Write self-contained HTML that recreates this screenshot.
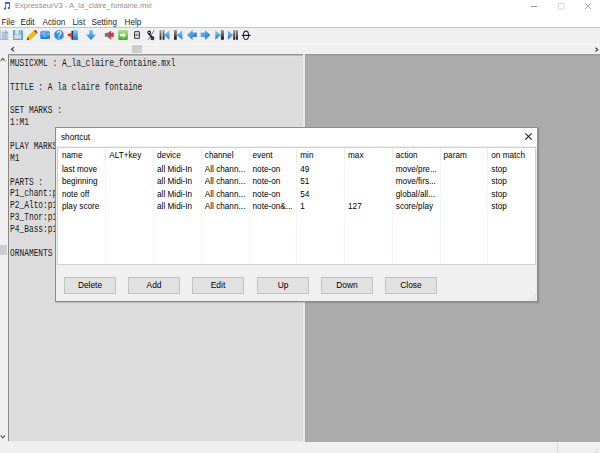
<!DOCTYPE html>
<html><head><meta charset="utf-8">
<style>
*{margin:0;padding:0;box-sizing:border-box}
html,body{width:600px;height:453px;overflow:hidden;background:#f0f0f0;font-family:"Liberation Sans",sans-serif;position:relative}
.a{position:absolute}
#title{left:0;top:0;width:600px;height:14px;background:#fff}
#menu{left:0;top:14px;width:600px;height:13px;background:#fff}
#sep{left:0;top:27px;width:600px;height:1px;background:#c6c6c6}
#tb{left:0;top:28px;width:600px;height:16px;background:#f0f0f0}
#hs{left:8px;top:44px;width:592px;height:10px;background:#f0f0f0;border-top:1px solid #fafafa}
#thumb{left:132px;top:45px;width:10px;height:8px;background:#cdcdcd}
#vs{left:0;top:54px;width:8px;height:387px;background:#f0f0f0}
#vthumb{left:0;top:245px;width:7px;height:10px;background:#cdcdcd}
#txt{left:8px;top:54px;width:295px;height:387px;background:#dcdcdc;border-left:1px solid #838383;border-top:1px solid #969696}
#txtt2{left:9px;top:55px;width:294px;height:1px;background:#b8b8b8}
#txtt3{left:9px;top:56px;width:294px;height:1px;background:#e2e2e2}
#txtl2{left:9px;top:55px;width:1px;height:386px;background:#e2e2e2}
#txtr{left:303px;top:54px;width:2px;height:388px;background:#e9e9e9}
#txtb{left:8px;top:441px;width:297px;height:1px;background:#ebebeb}
#gray{left:305px;top:54px;width:295px;height:388px;background:#ababab;border-top:1px solid #999;border-left:1px solid #a5a5a5}
#gray2{left:306px;top:55px;width:294px;height:1px;background:#a3a3a3}
#status{left:0;top:442px;width:600px;height:11px;background:#f0f0f0}
#ssep{left:557px;top:443px;width:1px;height:10px;background:#d8d8d8}
pre{font-family:"Liberation Mono",monospace;font-size:10.5px;line-height:11.86px;color:#1a1a1a;transform:scaleX(0.75);transform-origin:0 0;white-space:pre}
.tt{font-size:7.6px;color:#929292;white-space:nowrap}
.mn{font-size:8.2px;color:#262626;white-space:nowrap}
#dlg{left:55px;top:127px;width:483px;height:175px;background:#f0f0f0;border:1px solid #8c8c8c;box-shadow:1px 1px 1px rgba(0,0,0,0.15)}
#dtitle{left:0;top:0;width:481px;height:18px;background:#fff}
#list{left:1px;top:19px;width:479px;height:118px;background:#fff;border:1px solid #d0d0d0}
.dt{font-size:8.2px;color:#000;white-space:nowrap}
.btn{height:17px;width:52px;background:#e1e1e1;border:1px solid #c2c2c2;font-size:8.4px;text-align:center;line-height:15.5px;color:#000}
.cs{width:1px;background:#e8e8e8}
</style></head><body>
<div class="a" id="title"></div>
<div class="a" id="menu"></div>
<div class="a" id="sep"></div>
<div class="a" id="tb"></div>
<div class="a" id="hs"></div>
<div class="a" id="thumb"></div>
<div class="a" id="vs"></div>
<div class="a" id="vthumb"></div>
<div class="a" id="txt"></div>
<div class="a" id="txtt2"></div>
<div class="a" id="txtt3"></div>
<div class="a" id="txtl2"></div>
<div class="a" id="txtr"></div>
<div class="a" id="txtb"></div>
<div class="a" id="gray"></div>
<div class="a" id="gray2"></div>
<div class="a" id="status"></div>
<div class="a" id="ssep"></div>

<svg class="a" style="left:0;top:0" width="260" height="44" viewBox="0 0 260 44">
<defs>
<linearGradient id="gb" x1="0" y1="0" x2="0" y2="1"><stop offset="0" stop-color="#8fd4fb"/><stop offset="1" stop-color="#1574dc"/></linearGradient>
<linearGradient id="gbh" x1="0" y1="0" x2="1" y2="1"><stop offset="0" stop-color="#7cc8f8"/><stop offset="1" stop-color="#1668d8"/></linearGradient>
<linearGradient id="gk" x1="0" y1="0" x2="0" y2="1"><stop offset="0" stop-color="#9a9a9a"/><stop offset="1" stop-color="#111"/></linearGradient>
<linearGradient id="gg" x1="0" y1="0" x2="0" y2="1"><stop offset="0" stop-color="#b0e680"/><stop offset="1" stop-color="#38b02c"/></linearGradient>
<linearGradient id="gbox" x1="0" y1="0" x2="0" y2="1"><stop offset="0" stop-color="#5fb2f0"/><stop offset="1" stop-color="#1f7ad8"/></linearGradient>
</defs>
<!-- music note -->
<g fill="#1f6ee0">
<rect x="5.2" y="2" width="4.8" height="1.9"/>
<rect x="5.2" y="2" width="0.9" height="7"/>
<rect x="9.1" y="2" width="0.9" height="6.3"/>
<ellipse cx="5" cy="8.6" rx="1.2" ry="1.1"/>
<ellipse cx="8.9" cy="8" rx="1.2" ry="1.1"/>
</g>
<!-- 1 new doc -->
<path d="M0 30 H5.8 L8.7 32.9 V39.8 H0 Z" fill="#dce6ee"/>
<rect x="0" y="30" width="1" height="9.8" fill="#bcd0dc"/>
<rect x="2" y="32" width="5.6" height="7" fill="#b2bee6"/>
<path d="M5.4 30 V33.3 H8.7 Z" fill="#84aec4"/>
<rect x="0.5" y="39" width="8" height="0.8" fill="#8fb0c4"/>
<!-- 2 floppy -->
<path d="M13 30 H22 L23 31 V39.9 H13 Z" fill="#55aceb"/>
<rect x="15" y="30.2" width="5.6" height="4.3" fill="#e4e4e4"/>
<rect x="18.9" y="30.8" width="1.1" height="3" fill="#4a9ee0"/>
<rect x="14" y="35" width="7" height="3.8" fill="#dcd8d8"/>
<!-- 3 pencil -->
<path d="M27 40 L28 36.5 L34.5 30.5 L37 33 L30.5 39 Z" fill="#f2c200" stroke="#d88a00" stroke-width="0.6"/>
<path d="M34 31 L35.3 29.8 L37.6 32.1 L36.4 33.4 Z" fill="#e02020"/>
<path d="M26.8 40.2 L27.7 37.6 L29.3 39.2 Z" fill="#603010"/>
<!-- 4 blue box -->
<rect x="40.2" y="30.8" width="9.8" height="8.2" rx="1.5" fill="url(#gbox)"/>
<g fill="#b8dcf8"><rect x="42" y="33" width="1.2" height="1.2"/><rect x="43.8" y="32" width="0.7" height="5"/><rect x="44.5" y="35.5" width="1.2" height="1.2"/><rect x="46.8" y="34" width="2.4" height="0.9"/></g>
<!-- 5 help -->
<circle cx="59" cy="35" r="4.9" fill="#2f8ee2" stroke="#9fcff4" stroke-width="0.5"/>
<path d="M57.2 33.5 Q57.2 31.6 59 31.6 Q60.9 31.6 60.9 33.3 Q60.9 34.4 59.6 35 Q59 35.3 59 36.3" fill="none" stroke="#fff" stroke-width="1.2"/>
<rect x="58.4" y="37.2" width="1.2" height="1.2" fill="#fff"/>
<!-- 6 exit -->
<rect x="71.5" y="30" width="6.4" height="9.9" fill="url(#gb)"/>
<rect x="71.6" y="31" width="1.5" height="8.4" fill="#143a68"/>
<path d="M67.7 33.8 H70.3 V32.3 L72.9 35 L70.3 37.7 V36.2 H67.7 Z" fill="#f22a18"/>
<!-- 7 down arrow -->
<path d="M89 30 H93 V34.5 H96 L91 40 L86 34.5 H89 Z" fill="url(#gb)"/>
<!-- 8 mute -->
<rect x="104.9" y="33.1" width="2.2" height="3.6" fill="#6a6a6a"/>
<path d="M107 33.1 L111.3 30.4 V40 L107 36.7 Z" fill="#7a7a7a"/>
<path d="M109.6 32.9 L113.6 36.6 M113.6 32.9 L109.6 36.6" stroke="#ff1c1c" stroke-width="2"/>
<!-- 9 green -->
<rect x="118.2" y="30" width="9.7" height="9.9" rx="0.8" fill="url(#gg)"/>
<path d="M120 33.9 H123 V32.3 L126 35.1 L123 37.9 V36.3 H120 Z" fill="#fff"/>
<!-- 10 symbol -->
<rect x="134.6" y="31.5" width="4.8" height="7" rx="1" fill="none" stroke="#3a3a3a" stroke-width="1.1"/>
<path d="M137 30.6 V39.1" stroke="#999" stroke-width="0.7"/>
<path d="M134.3 35 H139.7" stroke="#555" stroke-width="0.9"/>
<!-- 11 percent-ish -->
<path d="M148.2 39.8 L154.2 30.5" stroke="#4a6ab0" stroke-width="0.9"/>
<ellipse cx="149.2" cy="32.6" rx="1.3" ry="1.5" fill="none" stroke="#1a1a2a" stroke-width="1.1"/>
<path d="M148.6 33.6 L153 38.4" stroke="#111" stroke-width="1.5"/>
<ellipse cx="152.4" cy="38.2" rx="1.4" ry="1.5" fill="none" stroke="#1a1a3a" stroke-width="1.1"/>
<!-- 12 |< with two bars -->
<rect x="159.6" y="30.1" width="1.8" height="9.6" fill="url(#gk)"/>
<rect x="162.6" y="30.1" width="1.9" height="9.6" fill="url(#gk)"/>
<path d="M164 35 L169.4 30.3 V39.8 Z" fill="url(#gb)"/>
<!-- 13 |< -->
<rect x="174" y="30.1" width="2.8" height="9.6" fill="url(#gk)"/>
<path d="M176.5 35 L182.4 30.3 V39.8 Z" fill="url(#gb)"/>
<!-- 14 left arrow -->
<path d="M186.8 35 L192.6 29.9 V32.4 H196.8 V36.9 H192.6 V39.9 Z" fill="url(#gbh)"/>
<!-- 15 right arrow -->
<path d="M210.4 35 L205 29.9 V32.4 H200.6 V36.9 H205 V39.9 Z" fill="url(#gbh)"/>
<!-- 16 >| -->
<path d="M215.3 30.2 L220.9 35 L215.3 39.8 Z" fill="url(#gb)"/>
<rect x="220.9" y="30.1" width="3" height="9.6" fill="url(#gk)"/>
<!-- 17 >|| -->
<path d="M227.9 30.2 L233.2 35 L227.9 39.8 Z" fill="url(#gb)"/>
<rect x="233.2" y="30.1" width="2.1" height="9.6" fill="url(#gk)"/>
<rect x="236" y="30.1" width="1.9" height="9.6" fill="url(#gk)"/>
<!-- 18 theta -->
<ellipse cx="246" cy="35.3" rx="2.6" ry="4.2" fill="none" stroke="#2a2a40" stroke-width="1.1"/>
<path d="M241.8 35.4 H250.7" stroke="#111" stroke-width="1.1"/>
</svg>

<!-- title -->
<div class="a tt" style="left:15px;top:1px">ExpresseurV3 - A_la_claire_fontaine.mxl</div>
<div class="a mn" style="left:1.5px;top:17.6px">File</div>
<div class="a mn" style="left:20.5px;top:17.6px">Edit</div>
<div class="a mn" style="left:42.5px;top:17.6px">Action</div>
<div class="a mn" style="left:72.5px;top:17.6px">List</div>
<div class="a mn" style="left:91.5px;top:17.6px">Setting</div>
<div class="a mn" style="left:124.5px;top:17.6px">Help</div>

<!-- text area -->
<pre class="a" style="left:10px;top:58px">MUSICXML : A_la_claire_fontaine.mxl

TITLE : A la claire fontaine

SET MARKS :
1:M1

PLAY MARKS
M1

PARTS :
P1_chant:p
P2_Alto:p1
P3_Tnor:p1
P4_Bass:p1

ORNAMENTS</pre>

<svg class="a" style="left:0;top:0" width="600" height="453" viewBox="0 0 600 453">
<!-- window controls -->
<rect x="531" y="6" width="6" height="0.9" fill="#8a8a8a"/>
<rect x="558.5" y="3.5" width="5.5" height="5.5" fill="none" stroke="#cfcfcf" stroke-width="0.8"/>
<path d="M585.2 3.2 L591 9 M591 3.2 L585.2 9" stroke="#8a8a8a" stroke-width="0.8"/>
<!-- scroll arrows -->
<path d="M14 47.2 L11.4 49.2 L14 51.2" fill="none" stroke="#4a4a4a" stroke-width="1.2"/>
<path d="M595.4 47.8 L597.8 49.6 L595.4 51.4" fill="none" stroke="#4a4a4a" stroke-width="1.2"/>
<path d="M0.6 61 L2.8 58.4 L5 61" fill="none" stroke="#555" stroke-width="1.1"/>
<path d="M0.6 435.3 L2.8 437.8 L5 435.3" fill="none" stroke="#555" stroke-width="1.1"/>
<!-- status bar grip -->
<g fill="#d0d0d0"><rect x="597" y="449" width="1" height="1"/><rect x="595" y="451" width="1" height="1"/><rect x="597" y="451" width="1" height="1"/></g>
</svg>

<!-- dialog -->
<div class="a" id="dlg">
  <div class="a" id="dtitle"></div>
  <div class="a dt" style="left:5px;top:5px">shortcut</div>
  <svg class="a" style="left:0;top:0" width="481" height="173" viewBox="56 128 481 173">
<path d="M525.3 133.3 L531.7 139.7 M531.7 133.3 L525.3 139.7" stroke="#1a1a1a" stroke-width="1.05"/>
<g fill="#cbcbcb" transform="translate(0.6,0)"><rect x="534" y="295" width="1" height="1"/><rect x="532" y="297" width="1" height="1"/><rect x="534" y="297" width="1" height="1"/><rect x="530" y="299" width="1" height="1"/><rect x="532" y="299" width="1" height="1"/><rect x="534" y="299" width="1" height="1"/></g>
</svg>

<div class="a" id="list"></div>
<div class="a cs" style="left:49px;top:20px;height:14px;background:#ebebeb"></div>
<div class="a cs" style="left:49px;top:34px;height:102px;background:#f2f5fa"></div>
<div class="a cs" style="left:97px;top:20px;height:14px;background:#ebebeb"></div>
<div class="a cs" style="left:97px;top:34px;height:102px;background:#f2f5fa"></div>
<div class="a cs" style="left:145px;top:20px;height:14px;background:#ebebeb"></div>
<div class="a cs" style="left:145px;top:34px;height:102px;background:#f2f5fa"></div>
<div class="a cs" style="left:193px;top:20px;height:14px;background:#ebebeb"></div>
<div class="a cs" style="left:193px;top:34px;height:102px;background:#f2f5fa"></div>
<div class="a cs" style="left:240px;top:20px;height:14px;background:#ebebeb"></div>
<div class="a cs" style="left:240px;top:34px;height:102px;background:#f2f5fa"></div>
<div class="a cs" style="left:288px;top:20px;height:14px;background:#ebebeb"></div>
<div class="a cs" style="left:288px;top:34px;height:102px;background:#f2f5fa"></div>
<div class="a cs" style="left:336px;top:20px;height:14px;background:#ebebeb"></div>
<div class="a cs" style="left:336px;top:34px;height:102px;background:#f2f5fa"></div>
<div class="a cs" style="left:384px;top:20px;height:14px;background:#ebebeb"></div>
<div class="a cs" style="left:384px;top:34px;height:102px;background:#f2f5fa"></div>
<div class="a cs" style="left:431px;top:20px;height:14px;background:#ebebeb"></div>
<div class="a cs" style="left:431px;top:34px;height:102px;background:#f2f5fa"></div>
<div class="a dt" style="left:6.00px;top:23.0px">name</div>
<div class="a dt" style="left:53.30px;top:23.0px">ALT+key</div>
<div class="a dt" style="left:101.05px;top:23.0px">device</div>
<div class="a dt" style="left:148.80px;top:23.0px">channel</div>
<div class="a dt" style="left:196.55px;top:23.0px">event</div>
<div class="a dt" style="left:244.30px;top:23.0px">min</div>
<div class="a dt" style="left:292.05px;top:23.0px">max</div>
<div class="a dt" style="left:339.80px;top:23.0px">action</div>
<div class="a dt" style="left:387.55px;top:23.0px">param</div>
<div class="a dt" style="left:435.30px;top:23.0px">on match</div>
<div class="a dt" style="left:6.00px;top:36.5px">last move</div>
<div class="a dt" style="left:101.05px;top:36.5px">all Midi-In</div>
<div class="a dt" style="left:148.80px;top:36.5px">All chann...</div>
<div class="a dt" style="left:196.55px;top:36.5px">note-on</div>
<div class="a dt" style="left:244.30px;top:36.5px">49</div>
<div class="a dt" style="left:339.80px;top:36.5px">move/pre...</div>
<div class="a dt" style="left:435.30px;top:36.5px">stop</div>
<div class="a dt" style="left:6.00px;top:49.0px">beginning</div>
<div class="a dt" style="left:101.05px;top:49.0px">all Midi-In</div>
<div class="a dt" style="left:148.80px;top:49.0px">All chann...</div>
<div class="a dt" style="left:196.55px;top:49.0px">note-on</div>
<div class="a dt" style="left:244.30px;top:49.0px">51</div>
<div class="a dt" style="left:339.80px;top:49.0px">move/firs...</div>
<div class="a dt" style="left:435.30px;top:49.0px">stop</div>
<div class="a dt" style="left:6.00px;top:61.5px">note off</div>
<div class="a dt" style="left:101.05px;top:61.5px">all Midi-In</div>
<div class="a dt" style="left:148.80px;top:61.5px">All chann...</div>
<div class="a dt" style="left:196.55px;top:61.5px">note-on</div>
<div class="a dt" style="left:244.30px;top:61.5px">54</div>
<div class="a dt" style="left:339.80px;top:61.5px">global/all...</div>
<div class="a dt" style="left:435.30px;top:61.5px">stop</div>
<div class="a dt" style="left:6.00px;top:74.0px">play score</div>
<div class="a dt" style="left:101.05px;top:74.0px">all Midi-In</div>
<div class="a dt" style="left:148.80px;top:74.0px">All chann...</div>
<div class="a dt" style="left:196.55px;top:74.0px">note-on&amp;...</div>
<div class="a dt" style="left:244.30px;top:74.0px">1</div>
<div class="a dt" style="left:292.05px;top:74.0px">127</div>
<div class="a dt" style="left:339.80px;top:74.0px">score/play</div>
<div class="a dt" style="left:435.30px;top:74.0px">stop</div>
<div class="a btn" style="left:8px;top:149px">Delete</div>
<div class="a btn" style="left:72px;top:149px">Add</div>
<div class="a btn" style="left:136px;top:149px">Edit</div>
<div class="a btn" style="left:201px;top:149px">Up</div>
<div class="a btn" style="left:265px;top:149px">Down</div>
<div class="a btn" style="left:329px;top:149px">Close</div>
</div>
</body></html>
